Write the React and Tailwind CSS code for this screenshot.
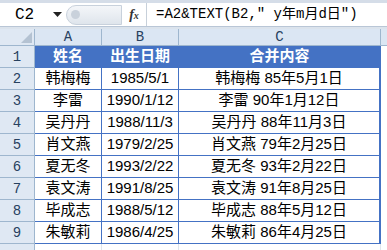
import React from "react";

const rows = [
  ["韩梅梅", "1985/5/1", "韩梅梅 85年5月1日"],
  ["李雷", "1990/1/12", "李雷 90年1月12日"],
  ["吴丹丹", "1988/11/3", "吴丹丹 88年11月3日"],
  ["肖文燕", "1979/2/25", "肖文燕 79年2月25日"],
  ["夏无冬", "1993/2/22", "夏无冬 93年2月22日"],
  ["袁文涛", "1991/8/25", "袁文涛 91年8月25日"],
  ["毕成志", "1988/5/12", "毕成志 88年5月12日"],
  ["朱敏莉", "1986/4/25", "朱敏莉 86年4月25日"],
];

const cjk = { fontFamily: '"Liberation Sans","Noto Sans CJK SC",sans-serif' };
const mono = { fontFamily: '"Liberation Mono","Noto Sans CJK SC",monospace' };

export default function App() {
  return (
    <div className="w-[387px] h-[250px] bg-white overflow-hidden flex flex-col">
      <div className="h-[3px] bg-[#d5dde8]" />
      <div className="h-[24px] flex items-center bg-white border-b border-[#b9c6d6]">
        <div className="w-[66px] h-full flex items-center relative">
          <span className="ml-[15px] text-[16px] text-black" style={mono}>C2</span>
          <svg className="absolute left-[53px] top-[9px]" width="9" height="6" viewBox="0 0 9 6">
            <path d="M0 0H9L4.5 5Z" fill="#222" />
          </svg>
        </div>
        <div className="w-[56px] h-[20px] rounded-l-full bg-gradient-to-b from-[#f4f6f9] to-[#dfe5ec] border border-[#c8d1dc] flex items-center">
          <div className="ml-[4px] w-[9px] h-[9px] rounded-full bg-[#c9d1db]" />
        </div>
        <div className="w-[24px] flex justify-center">
          <span className="italic font-bold text-[14px] text-[#333]" style={{ fontFamily: '"Liberation Serif",serif' }}>f<span className="text-[10px]">x</span></span>
        </div>
        <div className="w-[1px] h-full bg-[#c7d0da]" />
        <div className="flex-1 pl-[9px] text-[14px] text-black whitespace-nowrap" style={mono}>
          =A2&amp;TEXT(B2,″ y年m月d日″)
        </div>
      </div>
      <div className="h-[2px] bg-[#dbe3ec]" />
      <div className="grid grid-cols-[35px_67px_77px_202px_6px] grid-rows-[17px_repeat(9,22px)_6px]" style={mono}>
        <div className="bg-[#dfe8f3] border-r border-b border-[#9eb6ce] flex items-end justify-end p-[2px]">
          <svg width="11" height="11" viewBox="0 0 11 11"><path d="M11 0V11H0Z" fill="#b4c2d2" /></svg>
        </div>
        {["A", "B", "C"].map((c) => (
          <div key={c} className="bg-[#dbe6f3] border-r border-b border-[#9eb6ce] flex items-center justify-center text-[14px] text-[#27415f]">
            {c}
          </div>
        ))}
        <div className="bg-[#dbe6f3] border-b border-[#9eb6ce]" />

        <div className="bg-[#dfe8f3] border-r border-b border-[#9eb6ce] flex items-center justify-center text-[14px] text-[#27415f] pt-[2px]">1</div>
        {["姓名", "出生日期", "合并内容"].map((h) => (
          <div key={h} className="bg-[#4472c4] border-r border-b border-[#4472c4] flex items-center justify-center text-white font-bold text-[15px]" style={cjk}>
            {h}
          </div>
        ))}
        <div className="bg-white" />

        {rows.map((r, i) => (
          <React.Fragment key={i}>
            <div className="bg-[#dfe8f3] border-r border-b border-[#9eb6ce] flex items-center justify-center text-[14px] text-[#27415f] pt-[2px]">{i + 2}</div>
            <div className="border-r border-b border-[#4472c4] flex items-center justify-center text-[15px] text-black" style={cjk}>{r[0]}</div>
            <div className="border-r border-b border-[#4472c4] flex items-center justify-center text-[15px] text-black" style={cjk}>{r[1]}</div>
            <div className="border-r-2 border-b border-[#4472c4] flex items-center justify-center text-[15px] text-black" style={cjk}>{r[2]}</div>
            <div className="bg-white" />
          </React.Fragment>
        ))}
        <div className="bg-[#dfe8f3] border-r border-[#9eb6ce]" />
        <div className="border-r border-[#dfe5ec]" />
        <div className="border-r border-[#dfe5ec]" />
        <div className="border-r border-[#dfe5ec]" />
        <div />
      </div>
    </div>
  );
}
